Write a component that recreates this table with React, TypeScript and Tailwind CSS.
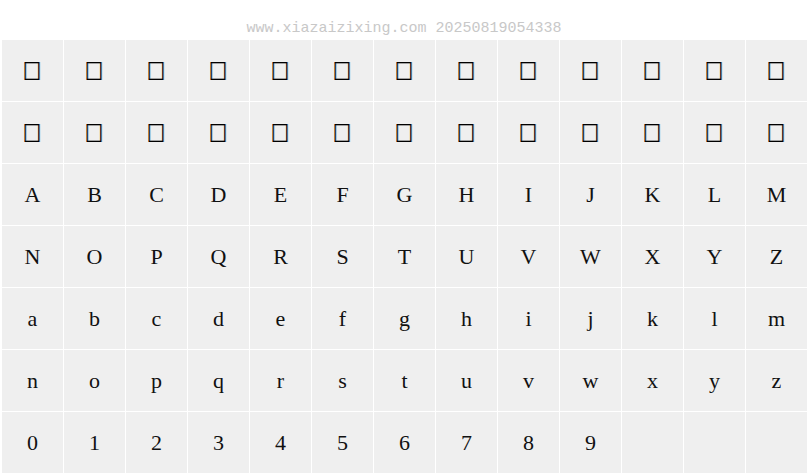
const rows: string[][] = [
  Array(13).fill("□"),
  Array(13).fill("□"),
  "ABCDEFGHIJKLM".split(""),
  "NOPQRSTUVWXYZ".split(""),
  "abcdefghijklm".split(""),
  "nopqrstuvwxyz".split(""),
  [..."0123456789".split(""), "", "", ""],
];

export default function App() {
  return (
    <div className="w-[808px] h-[476px] bg-white overflow-hidden">
      <div className="h-10 flex items-center justify-center pt-[17px] font-['Liberation_Mono',monospace] text-[15px] text-[#c8c8c8] leading-none">
        www.xiazaizixing.com 20250819054338
      </div>
      <div className="ml-[2px] grid grid-cols-[repeat(13,61px)] auto-rows-[61px] gap-px">
        {rows.flat().map((ch, i) =>
          ch === "□" ? (
            <div key={i} className="flex items-center justify-center bg-[#efefef]">
              <span className="-mt-[2px] -ml-px font-['DejaVu_Sans',sans-serif] text-[23px] leading-none text-black scale-x-[0.85] [text-shadow:1px_0_0_#999]">
                {ch}
              </span>
            </div>
          ) : (
            <div
              key={i}
              className="flex items-center justify-center bg-[#efefef] text-[22px] leading-none text-[#111] font-['Liberation_Serif',serif]"
            >
              {ch}
            </div>
          )
        )}
      </div>
    </div>
  );
}
